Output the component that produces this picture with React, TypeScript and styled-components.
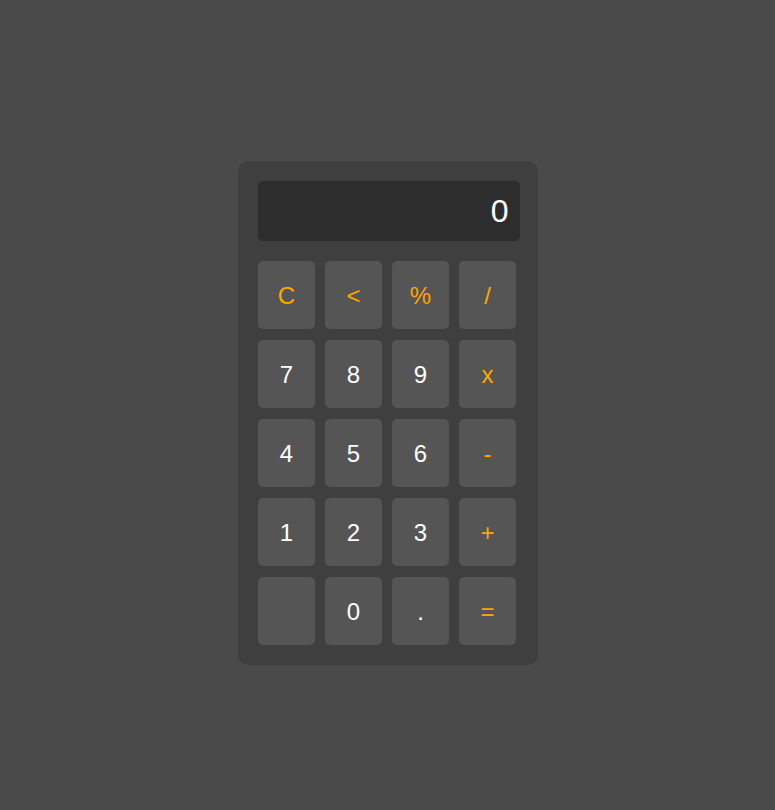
import React from "react";
import styled, { createGlobalStyle } from "styled-components";

const Global = createGlobalStyle`
  body {
    margin: 8px;
    background: #4a4a4a;
    font-family: "Liberation Sans", Arial, sans-serif;
  }
`;

const Page = styled.div`
  min-height: 100vh;
  display: flex;
  align-items: center;
  justify-content: center;
`;

const Calculator = styled.div`
  width: 300px;
  box-sizing: border-box;
  padding: 20px 18px 20px 20px;
  background: #3f3f3f;
  border-radius: 10px;
`;

const Display = styled.div`
  height: 60px;
  box-sizing: border-box;
  background: #2d2d2d;
  border-radius: 5px;
  color: #ffffff;
  font-size: 32px;
  display: flex;
  align-items: center;
  justify-content: flex-end;
  padding-right: 11px;
  margin-bottom: 20px;
`;

const Keys = styled.div`
  display: grid;
  grid-template-columns: repeat(4, 57px);
  grid-auto-rows: 68px;
  column-gap: 10px;
  row-gap: 11px;
`;

const Key = styled.button<{ $op?: boolean }>`
  border: none;
  border-radius: 5px;
  background: #555555;
  color: ${(p) => (p.$op ? "#ffa500" : "#ffffff")};
  font-family: "Liberation Sans", Arial, sans-serif;
  font-size: 24px;
  padding: 1px 0 0 1px;
  display: flex;
  align-items: center;
  justify-content: center;
`;

const keys: { label: string; op?: boolean }[] = [
  { label: "C", op: true },
  { label: "<", op: true },
  { label: "%", op: true },
  { label: "/", op: true },
  { label: "7" },
  { label: "8" },
  { label: "9" },
  { label: "x", op: true },
  { label: "4" },
  { label: "5" },
  { label: "6" },
  { label: "-", op: true },
  { label: "1" },
  { label: "2" },
  { label: "3" },
  { label: "+", op: true },
  { label: "" },
  { label: "0" },
  { label: "." },
  { label: "=", op: true },
];

export default function App() {
  return (
    <>
      <Global />
      <Page>
        <Calculator>
          <Display>0</Display>
          <Keys>
            {keys.map((k, i) => (
              <Key key={i} $op={k.op}>
                {k.label}
              </Key>
            ))}
          </Keys>
        </Calculator>
      </Page>
    </>
  );
}
